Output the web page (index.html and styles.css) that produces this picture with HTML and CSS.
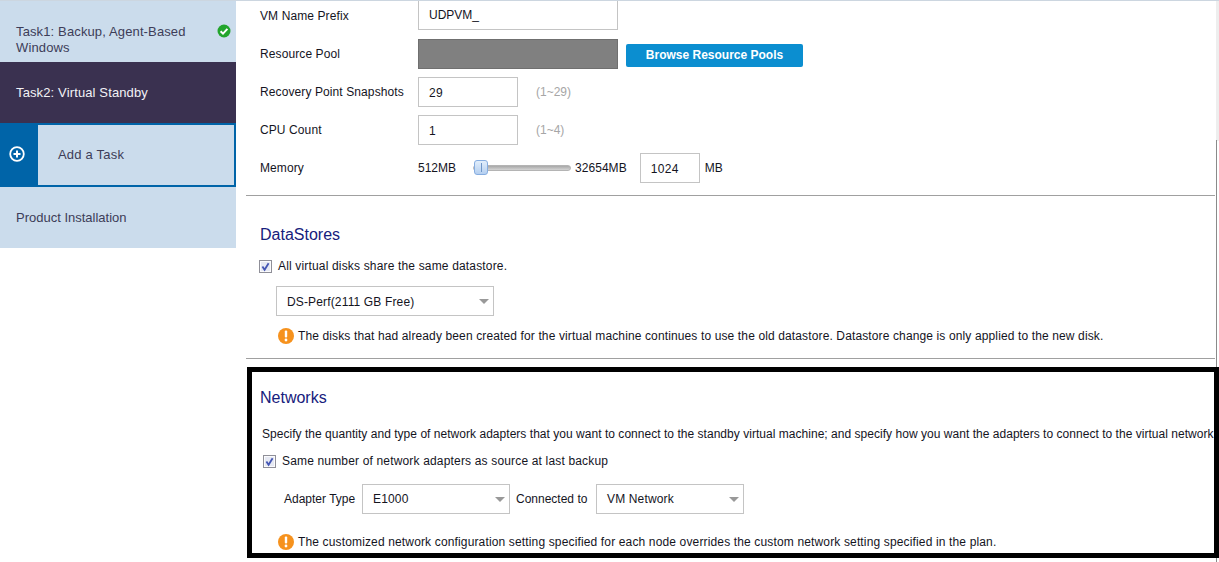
FILE: index.html
```html
<!DOCTYPE html>
<html lang="en">
<head>
<meta charset="utf-8">
<title>Virtual Standby</title>
<link rel="stylesheet" href="styles.css">
</head>
<body>
<div class="app">
  <aside class="sidebar">
    <div class="task task-done">
      <span class="task-name">Task1: Backup, Agent-Based Windows</span>
      <svg class="done-icon" width="14" height="14" viewBox="0 0 14 14"><circle cx="7" cy="7" r="6.5" fill="#22a52c"/><path d="M3.6 7.2 6 9.6 10.4 4.9" fill="none" stroke="#fff" stroke-width="2"/></svg>
    </div>
    <div class="task task-active"><span class="task-name">Task2: Virtual Standby</span></div>
    <div class="task-add">
      <div class="add-tab"><svg width="16" height="16" viewBox="0 0 16 16"><circle cx="8" cy="8" r="6.8" fill="none" stroke="#fff" stroke-width="1.8"/><path d="M8 4.5v7M4.5 8h7" stroke="#fff" stroke-width="2"/></svg></div>
      <div class="add-label">Add a Task</div>
    </div>
    <div class="task task-install"><span class="task-name task-name-plain">Product Installation</span></div>
  </aside>
  <main class="content">
    <div class="scroll-track"></div>
    <div class="scroll-line"></div>
    <section class="settings">
      <div class="row">
        <span class="label">VM Name Prefix</span>
        <span class="field field-wide field-cut">UDPVM_</span>
      </div>
      <div class="row">
        <span class="label">Resource Pool</span>
        <span class="field field-wide field-gray"></span>
        <button class="browse">Browse Resource Pools</button>
      </div>
      <div class="row">
        <span class="label">Recovery Point Snapshots</span>
        <span class="field field-num">29</span>
        <span class="hint">(1~29)</span>
      </div>
      <div class="row">
        <span class="label">CPU Count</span>
        <span class="field field-num">1</span>
        <span class="hint">(1~4)</span>
      </div>
      <div class="row">
        <span class="label">Memory</span>
        <span class="mem-min">512MB</span>
        <span class="slider"><span class="slider-knob"></span></span>
        <span class="mem-max">32654MB</span>
        <span class="field field-mem">1024</span>
        <span class="mem-unit">MB</span>
      </div>
    </section>
    <hr class="rule">
    <section class="datastores">
      <h2 class="heading">DataStores</h2>
      <label class="check">
        <svg class="box" width="13" height="13" viewBox="0 0 13 13"><rect x=".5" y=".5" width="12" height="12" fill="#d9deec" stroke="#8f8f98"/><rect x="1.5" y="1.5" width="10" height="10" fill="#e6e9f3" stroke="#fbfbfd"/><path d="M3.4 6.4 5.6 9.8 9.6 3.2" fill="none" stroke="#4456b4" stroke-width="1.8"/></svg>
        <span>All virtual disks share the same datastore.</span>
      </label>
      <div class="select select-ds">DS-Perf(2111 GB Free)<i class="caret"></i></div>
      <p class="warn">
        <svg class="warn-icon" width="16" height="16" viewBox="0 0 16 16"><circle cx="8" cy="8" r="8" fill="#f6921e"/><rect x="6.8" y="2.6" width="2.4" height="7" rx="1" fill="#fff"/><circle cx="8" cy="12" r="1.4" fill="#fff"/></svg>
        <span>The disks that had already been created for the virtual machine continues to use the old datastore. Datastore change is only applied to the new disk.</span>
      </p>
    </section>
    <hr class="rule rule-second">
    <section class="networks">
      <h2 class="heading">Networks</h2>
      <p class="intro">Specify the quantity and type of network adapters that you want to connect to the standby virtual machine; and specify how you want the adapters to connect to the virtual network</p>
      <label class="check check-net">
        <svg class="box" width="13" height="13" viewBox="0 0 13 13"><rect x=".5" y=".5" width="12" height="12" fill="#d9deec" stroke="#8f8f98"/><rect x="1.5" y="1.5" width="10" height="10" fill="#e6e9f3" stroke="#fbfbfd"/><path d="M3.4 6.4 5.6 9.8 9.6 3.2" fill="none" stroke="#4456b4" stroke-width="1.8"/></svg>
        <span>Same number of network adapters as source at last backup</span>
      </label>
      <div class="adapter">
        <span class="adapter-label">Adapter Type</span>
        <div class="select select-net">E1000<i class="caret"></i></div>
        <span class="adapter-label adapter-to">Connected to</span>
        <div class="select select-vm">VM Network<i class="caret"></i></div>
      </div>
      <p class="warn warn-net">
        <svg class="warn-icon" width="16" height="16" viewBox="0 0 16 16"><circle cx="8" cy="8" r="8" fill="#f6921e"/><rect x="6.8" y="2.6" width="2.4" height="7" rx="1" fill="#fff"/><circle cx="8" cy="12" r="1.4" fill="#fff"/></svg>
        <span>The customized network configuration setting specified for each node overrides the custom network setting specified in the plan.</span>
      </p>
    </section>
  </main>
</div>
</body>
</html>
```
FILE: styles.css
```css
* { box-sizing: border-box; }
html, body { margin: 0; height: 100%; overflow: hidden; background: #fff; }
body { font: 12px "Liberation Sans", Arial, sans-serif; color: #14141e; }
.app { display: flex; width: 1219px; height: 562px; border-top: 1px solid #ccd6e0; }

.sidebar { width: 236px; flex: none; display: flex; flex-direction: column; font-size: 13px; }
.task { display: flex; align-items: center; padding-left: 16px; height: 61px; background: #cbdcec; color: #3d3d58; line-height: 16px; letter-spacing: .13px; }
.task-done { position: relative; }
.task-done .task-name { width: 195px; padding-top: 16px; }
.done-icon { position: absolute; left: 217px; top: 23px; }
.task-active { background: #3a3150; color: #f2f2f6; }
.task-name-plain { letter-spacing: 0; }
.task-add { display: flex; height: 64px; border: 2px solid #0064a8; border-left: 0; background: #cbdcec; }
.add-tab { width: 38px; background: #0064a8; display: flex; align-items: center; justify-content: center; padding: 0 4px 2px 0; }
.add-label { padding: 0 0 2px 20px; display: flex; align-items: center; color: #3d3d58; letter-spacing: .2px; }

.content { position: relative; flex: 1; min-width: 0; padding-left: 10px; display: flex; flex-direction: column; overflow: hidden; }
.scroll-track { position: absolute; right: 0; top: 0; width: 3px; height: 140px; background: #eee; }
.scroll-line { position: absolute; right: 2px; top: 139px; bottom: 0; width: 1px; background: #8a8a8a; }

.settings { padding-left: 14px; display: flex; flex-direction: column; gap: 8px; }
.row { display: flex; align-items: center; height: 30px; }
.label { width: 158px; flex: none; letter-spacing: .1px; }
.field { display: flex; align-items: center; height: 30px; border: 1px solid #c4c4c4; padding: 1px 0 0 10px; background: #fff; letter-spacing: .3px; }
.field-wide { width: 200px; }
.field-cut { border-top: 0; height: 29px; align-self: flex-start; padding-top: 0; letter-spacing: 0; }
.field-gray { background: #808080; border-color: #6f6f6f; }
.field-num { width: 100px; }
.field-mem { width: 60px; margin-left: 13px; }
.browse { margin: 2px 0 0 8px; width: 177px; height: 23px; border: 0; border-radius: 2px; background: #0b8ed0; color: #fff; font: bold 12px "Liberation Sans", Arial, sans-serif; }
.hint { margin-left: 18px; color: #a6a6a6; }
.mem-min { width: 55px; }
.slider { position: relative; width: 98px; height: 6px; border-radius: 3px; background: linear-gradient(#a8a8a8, #d4d4d4); border: 1px solid #b4b4b4; }
.slider-knob { position: absolute; left: 0; top: -6px; width: 14px; height: 15px; border-radius: 3px; background: linear-gradient(#e2eefb, #b4cff0); border: 1px solid #86ade0; }
.slider-knob::after { content: ""; position: absolute; left: 6px; top: 2px; width: 1px; height: 9px; background: #6f96c8; }
.mem-max { margin-left: 4px; letter-spacing: .05px; }
.mem-unit { margin-left: 5px; }

.rule { margin: 12px 4px 0 0; border: 0; border-top: 1px solid #a0a0a0; height: 1px; flex: none; }
.datastores { padding-left: 14px; flex: none; }
.heading { margin: 0; font-size: 16px; font-weight: normal; line-height: 20px; color: #16207c; }
.datastores .heading { margin-top: 29px; }
.check { display: flex; align-items: center; gap: 6px; margin: 14px 0 0 -1px; letter-spacing: .165px; }
.select { position: relative; display: flex; align-items: center; height: 30px; border: 1px solid #c4c4c4; padding-left: 10px; letter-spacing: .15px; }
.caret { position: absolute; right: 3px; top: 12px; width: 0; height: 0; border: 5px solid transparent; border-top: 5px solid #999; border-bottom: 0; margin-right: 1px; }
.select-ds { width: 218px; margin: 13px 0 0 16px; padding-top: 1px; }
.warn { display: flex; align-items: center; gap: 4px; margin: 12px 0 0 18px; letter-spacing: .127px; }
.rule-second { margin-top: 14px; flex: none; }

.networks { position: relative; z-index: 1; flex: none; margin: 8px 0 0 1px; height: 191px; border: 5px solid #000; background: #fff; padding-left: 8px; white-space: nowrap; overflow: hidden; }
.networks .heading { margin-top: 16px; }
.intro { margin: 19px 0 0 2px; line-height: 14px; letter-spacing: .032px; }
.check-net { margin: 13px 0 0 3px; }
.adapter { display: flex; align-items: center; margin: 16px 0 0 24px; }
.adapter-label { width: 78px; }
.adapter-to { width: 80px; margin-left: 6px; }
.select-net { width: 148px; }
.select-vm { width: 148px; }
.warn-net { margin-top: 20px; letter-spacing: .146px; }
```
